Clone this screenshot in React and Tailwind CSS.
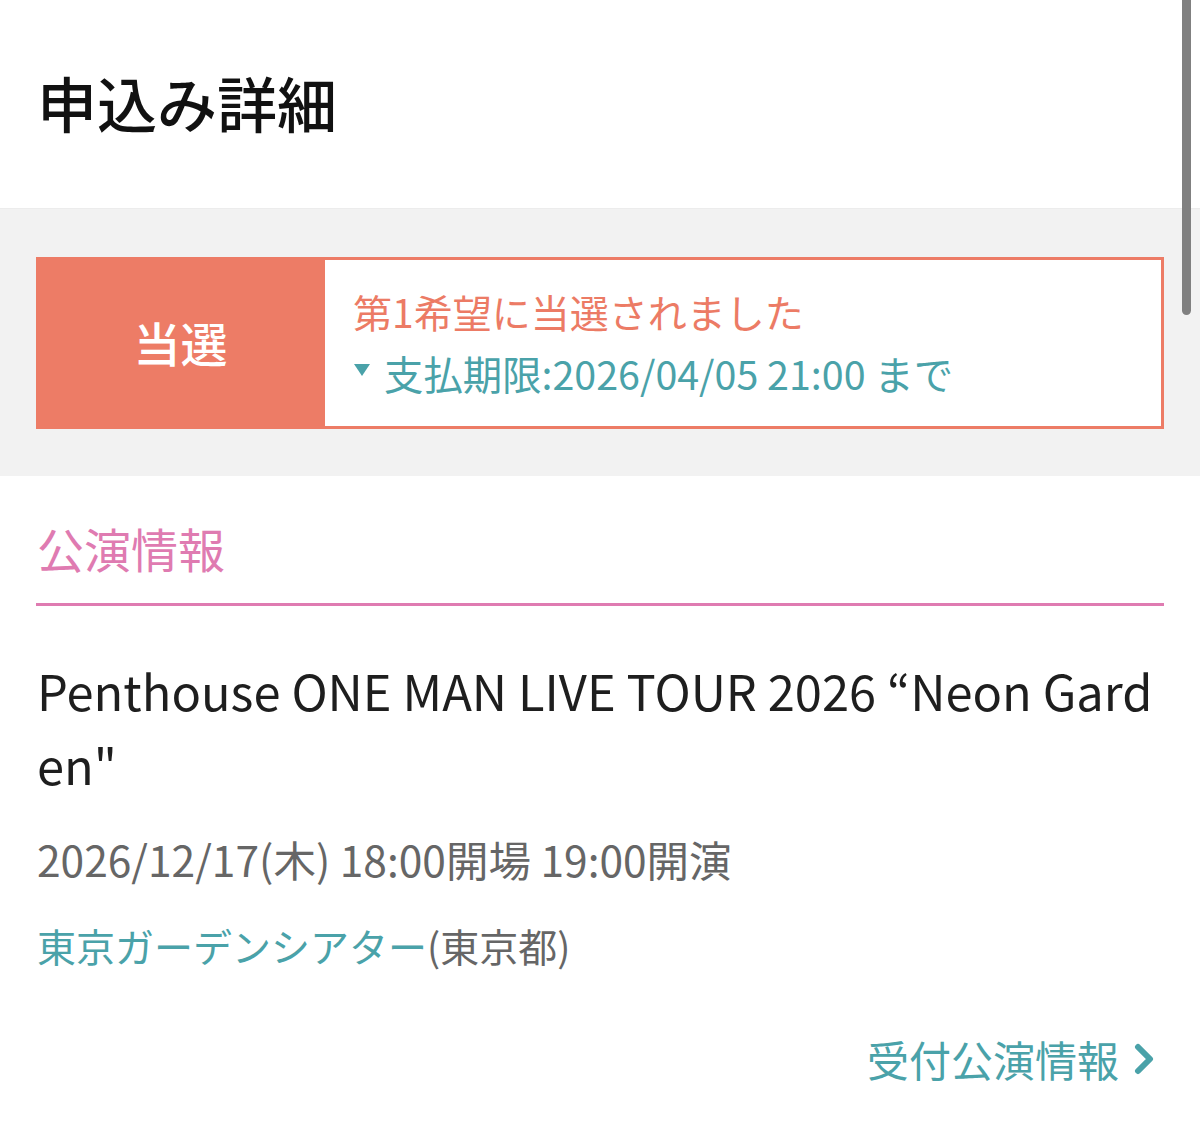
export default function App() {
  return (
    <div
      className="relative w-[1200px] h-[1146px] bg-white overflow-hidden"
      style={{ fontFamily: '"Noto Sans CJK JP", "Noto Sans", sans-serif' }}
    >
      {/* Header */}
      <div className="h-[208px] flex items-center pl-[37px] pb-[4px]">
        <h1 className="text-[60px] font-medium text-[#111] leading-none">申込み詳細</h1>
      </div>

      {/* Status */}
      <div className="bg-[#f2f2f2] border-t border-[#ececec] px-[36px] pt-[48px] pb-[47px]">
        <div className="flex h-[172px]">
          <div className="w-[289px] bg-[#ed7c66] flex items-center justify-center">
            <span className="text-[47px] text-white font-medium leading-none pb-[4px]">当選</span>
          </div>
          <div className="flex-1 bg-white border-[3px] border-l-0 border-[#ed7c66] flex flex-col justify-center pl-[28px] pb-[3px]">
            <p className="text-[39px] leading-[61px] text-[#ec7b65]">第1希望に当選されました</p>
            <p className="text-[39.4px] leading-[61px] text-[#4aa2a9] flex items-center">
              <svg width="16" height="13" viewBox="0 0 16 13" className="mr-[14px] ml-[1px] -mt-[4px]">
                <polygon points="0,0 16,0 8,12" fill="#4aa2a9" />
              </svg>
              支払期限:2026/04/05 21:00 まで
            </p>
          </div>
        </div>
      </div>

      {/* Performance info */}
      <div className="px-[36px] pt-[40px]">
        <div className="border-b-[3px] border-[#df7bb1] pb-[23px]">
          <h2 className="text-[47px] leading-[64px] text-[#df7bb1] pl-[1px]">公演情報</h2>
        </div>

        <p className="mt-[47px] text-[48.8px] leading-[74px] text-[#1e1e1e] break-all pl-[1px]">
          Penthouse ONE MAN LIVE TOUR 2026 “Neon Garden"
        </p>

        <p className="mt-[28px] text-[42.5px] leading-[60px] text-[#666] pl-[1px]">
          2026/12/17(木) 18:00開場 19:00開演
        </p>

        <p className="mt-[26px] text-[39px] leading-[60px] pl-[1px]">
          <span className="text-[#4aa2a9]">東京ガーデンシアター</span>
          <span className="text-[#666]">(東京都)</span>
        </p>

        <div className="mt-[54px] flex justify-end items-center pr-[8px]">
          <span className="text-[42px] leading-[60px] text-[#4aa2a9]">受付公演情報</span>
          <svg width="24" height="32" viewBox="0 0 24 32" className="ml-[13px]">
            <polyline points="6,4 18,16 6,28" fill="none" stroke="#4aa2a9" strokeWidth="6" strokeLinecap="round" strokeLinejoin="round" />
          </svg>
        </div>
      </div>

      {/* Scroll indicator */}
      <div className="absolute top-0 left-[1182px] w-[9px] h-[315px] bg-[#808080] rounded-b-full" />
    </div>
  )
}
